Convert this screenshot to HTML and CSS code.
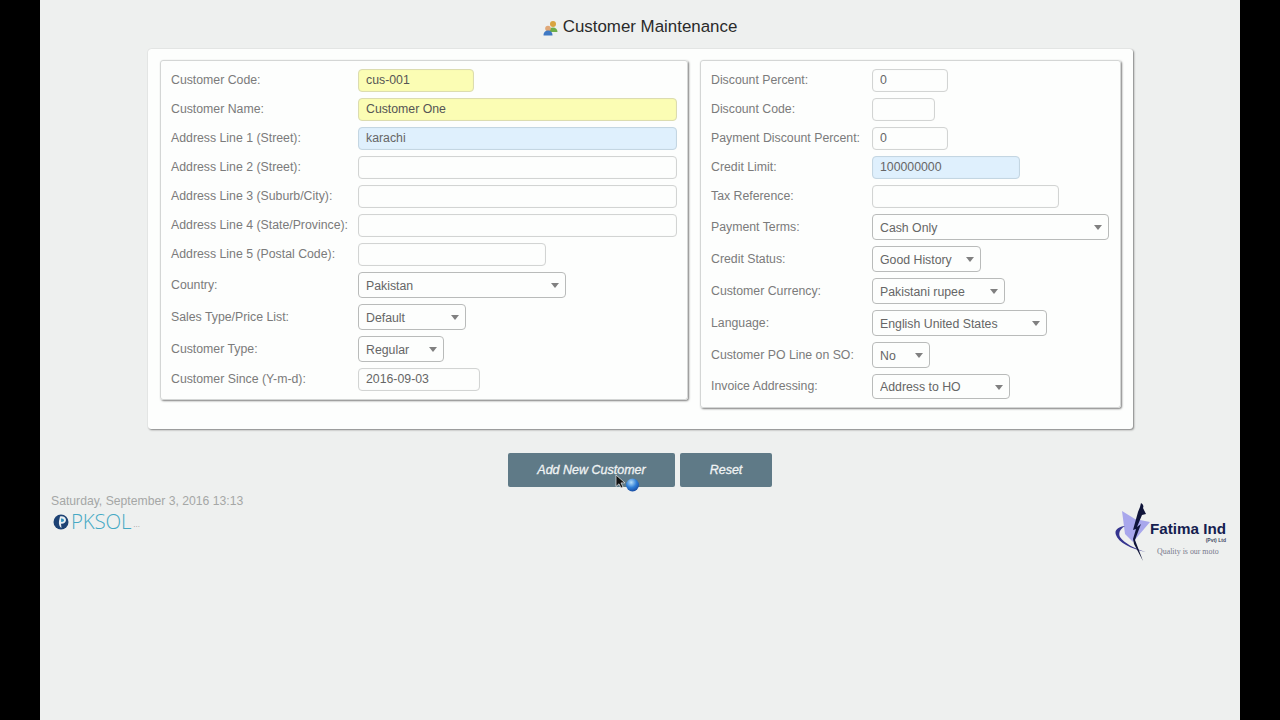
FILE: index.html
```html
<!DOCTYPE html>
<html lang="en">
<head>
<meta charset="utf-8">
<title>Customer Maintenance</title>
<link rel="stylesheet" href="styles.css">
</head>
<body>
<div class="stage">
<main class="page">
  <header class="title">
    <svg class="title-icon" width="15" height="16" viewBox="0 0 15 16">
      <circle cx="10" cy="4" r="3" fill="#d9a441"/>
      <path d="M5.500 12c0-3 2-4.500 4.500-4.500s4.500 1.500 4.500 4.500z" fill="#6fae4a"/>
      <circle cx="5" cy="8.500" r="2.800" fill="#e0a878"/>
      <path d="M0.500 15.500c0-3.500 2-5 4.500-5s4.500 1.500 4.500 5z" fill="#3f79c4"/>
    </svg>
    <h1 class="title-text">Customer Maintenance</h1>
  </header>

  <section class="panel">
    <div class="fieldset fs-left">
      <label class="lbl lbl-i">Customer Code:</label>
      <input class="ctl w116 req" value="cus-001">
      <label class="lbl lbl-i">Customer Name:</label>
      <input class="ctl w319 req" value="Customer One">
      <label class="lbl lbl-i">Address Line 1 (Street):</label>
      <input class="ctl w319 hl" value="karachi">
      <label class="lbl lbl-i">Address Line 2 (Street):</label>
      <input class="ctl w319">
      <label class="lbl lbl-i">Address Line 3 (Suburb/City):</label>
      <input class="ctl w319">
      <label class="lbl lbl-i">Address Line 4 (State/Province):</label>
      <input class="ctl w319">
      <label class="lbl lbl-i">Address Line 5 (Postal Code):</label>
      <input class="ctl w188">
      <label class="lbl">Country:</label>
      <div class="sel w208"><select><option>Pakistan</option></select></div>
      <label class="lbl">Sales Type/Price List:</label>
      <div class="sel w108"><select><option>Default</option></select></div>
      <label class="lbl">Customer Type:</label>
      <div class="sel w86"><select><option>Regular</option></select></div>
      <label class="lbl lbl-i">Customer Since (Y-m-d):</label>
      <input class="ctl w122" value="2016-09-03">
    </div>

    <div class="fieldset fs-right">
      <label class="lbl lbl-i">Discount Percent:</label>
      <input class="ctl w76" value="0">
      <label class="lbl lbl-i">Discount Code:</label>
      <input class="ctl w63">
      <label class="lbl lbl-i">Payment Discount Percent:</label>
      <input class="ctl w76" value="0">
      <label class="lbl lbl-i">Credit Limit:</label>
      <input class="ctl w148 hl" value="100000000">
      <label class="lbl lbl-i">Tax Reference:</label>
      <input class="ctl w187">
      <label class="lbl">Payment Terms:</label>
      <div class="sel w237"><select><option>Cash Only</option></select></div>
      <label class="lbl">Credit Status:</label>
      <div class="sel w109"><select><option>Good History</option></select></div>
      <label class="lbl">Customer Currency:</label>
      <div class="sel w133"><select><option>Pakistani rupee</option></select></div>
      <label class="lbl">Language:</label>
      <div class="sel w175"><select><option>English United States</option></select></div>
      <label class="lbl">Customer PO Line on SO:</label>
      <div class="sel w58"><select><option>No</option></select></div>
      <label class="lbl lbl-last">Invoice Addressing:</label>
      <div class="sel sel-short w138"><select><option>Address to HO</option></select></div>
    </div>
  </section>

  <div class="actions">
    <div class="btn-wrap">
      <button class="btn btn-add" type="button">Add New Customer</button>
      <svg class="cursor" width="28" height="22" viewBox="0 0 28 22">
        <defs>
          <radialGradient id="globe" cx=".4" cy=".3" r=".8">
            <stop offset="0" stop-color="#b6def8"/>
            <stop offset=".5" stop-color="#2f7fd8"/>
            <stop offset="1" stop-color="#123f94"/>
          </radialGradient>
        </defs>
        <circle cx="17.500" cy="11" r="6.500" fill="url(#globe)"/>
        <path d="M1 1v11.500l3-2.700 2 4.200 2-1-2-4.100h4z" fill="#111" stroke="#eee" stroke-width=".7"/>
      </svg>
    </div>
    <button class="btn btn-reset" type="button">Reset</button>
  </div>

  <footer class="foot">
    <div class="foot-left">
      <div class="stamp">Saturday, September 3, 2016 13:13</div>
      <div class="pksol">
        <svg width="16" height="16" viewBox="0 0 16 16">
          <circle cx="8" cy="8" r="7.500" fill="#1d4274"/>
          <path d="M7 2.500c3-.8 6 .8 6 3.600 0 2.600-2.700 4-5 3.600l.5 4.300C6.500 13 5.500 10 6 7z" fill="#e8eef2"/>
          <path d="M8 4.500c1.700-.3 3 .6 3 1.800S9.700 8.200 8.200 8z" fill="#2d8fbe"/>
        </svg>
        <span class="pksol-name">PKSOL</span><span class="pksol-tail">...</span>
      </div>
    </div>
    <div class="fatima">
      <svg class="fatima-mark" width="40" height="60" viewBox="0 0 40 60">
        <path d="M7 9l13 8 15 3-17 20-8-8z" fill="#a8a7ec"/>
        <path d="M10 24C3 25-1 28 1 33c2 7 15 14 30 17-11-3-22-9-26-15-2-4 0-8 5-11z" fill="#35358f"/>
        <path d="M26 1c2 1 3 3 2 5l3 6-4 1-5 12 4-3-6 16 8 21-9-17-1-5 3-10-3 1 5-18 2-5z" fill="#10153a"/>
      </svg>
      <div class="fatima-text">
        <div class="fatima-name">Fatima Ind</div>
        <div class="fatima-pvt">(Pvt) Ltd</div>
        <div class="fatima-moto">Quality is our moto</div>
      </div>
    </div>
  </footer>
</main>
</div>
</body>
</html>
```
FILE: styles.css
```css
* { box-sizing: border-box; }
html, body { margin: 0; height: 100%; }
body { background: #000; font-family: "Liberation Sans", Arial, sans-serif; overflow: hidden; }
.stage { width: 1200px; height: 720px; margin: 0 auto; }
.page { height: 720px; background: #eef0ef; display: flex; flex-direction: column; }

.title { height: 49px; padding-top: 5px; display: flex; align-items: center; justify-content: center; gap: 5px; }
.title-text { margin: 0; font-size: 16.900px; font-weight: 400; color: #2a2a2a; }
.title-icon { margin-top: 1px; }

.panel {
  width: 985px; margin-left: 108px; padding: 11px 12px 21px;
  background: #fdfefd; border-radius: 3px;
  box-shadow: 1px 1px 2px rgba(0,0,0,.45), 0 0 1px rgba(0,0,0,.2);
  display: flex; gap: 12px; align-items: flex-start;
}
.fieldset {
  display: grid; row-gap: 6px; align-items: center; justify-items: start;
  padding: 8px 10px; border-radius: 3px;
  border: 1px solid #d4d6d5;
  box-shadow: 1px 1px 2px rgba(0,0,0,.5);
}
.fs-left { width: 528px; grid-template-columns: 187px 1fr; }
.fs-right { width: 421px; grid-template-columns: 161px 1fr; }

.lbl { font-size: 12.300px; color: #7b7b7b; white-space: nowrap; }
.lbl-i { padding-bottom: 1px; }
.lbl-last { padding-bottom: 2px; }

.ctl, .sel select {
  font-family: inherit; font-size: 12.300px; color: #666;
  border: 1px solid #d2d4d3; border-radius: 4px; background: #fdfefd;
  outline: none;
}
.ctl { height: 23px; padding: 0 7px 1px; box-shadow: inset 0 0 1px rgba(0,0,0,.08); }
.req { background: #fbfdb4; border-color: #dcdcb0; color: #555; }
.hl { background: #dff0fd; border-color: #c4d6e2; }

.sel { position: relative; height: 26px; }
.sel-short { height: 25px; }
.sel select {
  appearance: none; -webkit-appearance: none; width: 100%; height: 100%;
  padding: 1px 7px 0; border-color: #b9bbba;
}
.sel::after {
  content: ""; position: absolute; right: 7px; top: 11px;
  border: 4px solid transparent; border-top: 5px solid #808080; border-bottom: 0;
}

.w58 { width: 58px; } .w63 { width: 63px; } .w76 { width: 76px; } .w86 { width: 86px; }
.w108 { width: 108px; } .w109 { width: 109px; } .w116 { width: 116px; } .w122 { width: 122px; }
.w133 { width: 133px; } .w138 { width: 138px; } .w148 { width: 148px; } .w175 { width: 175px; }
.w187 { width: 187px; } .w188 { width: 188px; } .w208 { width: 208px; } .w237 { width: 237px; } .w319 { width: 319px; }

.actions { margin-top: 24px; display: flex; justify-content: center; gap: 5px; }
.btn-wrap { position: relative; display: flex; }
.btn {
  height: 34px; border: 0; border-radius: 2px; background: #5f7a87; color: #f0f3f4;
  font-family: inherit; font-size: 12.500px; font-style: italic; font-weight: 400;
  -webkit-text-stroke: .3px #f0f3f4;
}
.btn-add { width: 167px; }
.btn-reset { width: 92px; }
.cursor { position: absolute; left: 107px; top: 21px; }

.foot { margin-top: 7px; padding: 0 13px 0 11px; display: flex; justify-content: space-between; align-items: flex-start; }
.foot-left { display: flex; flex-direction: column; }
.stamp { font-size: 12.200px; color: #a5a7a6; line-height: 15px; }
.pksol { margin: 4px 0 0 2px; display: flex; align-items: center; gap: 2px; height: 17px; }
.pksol-name { font-family: "Open Sans", sans-serif; font-weight: 300; font-size: 20.500px; color: #45a9c4; letter-spacing: -.2px; line-height: 17px; }
.pksol-tail { font-size: 8px; color: #9a9a9a; align-self: flex-end; line-height: 10px; }

.fatima { display: flex; margin-top: 8px; width: 112px; height: 60px; }
.fatima-mark { flex: none; margin-right: -5px; }
.fatima-text { padding-top: 19px; display: flex; flex-direction: column; }
.fatima-name { font-size: 15.200px; font-weight: 700; color: #15204f; line-height: 15px; white-space: nowrap; }
.fatima-pvt { font-size: 5px; font-weight: 700; color: #444b66; text-align: right; line-height: 6px; margin-top: 1px; }
.fatima-moto { font-family: "Liberation Serif", serif; font-size: 7.900px; color: #77798c; line-height: 11px; margin: 3px 0 0 7px; white-space: nowrap; }
```
